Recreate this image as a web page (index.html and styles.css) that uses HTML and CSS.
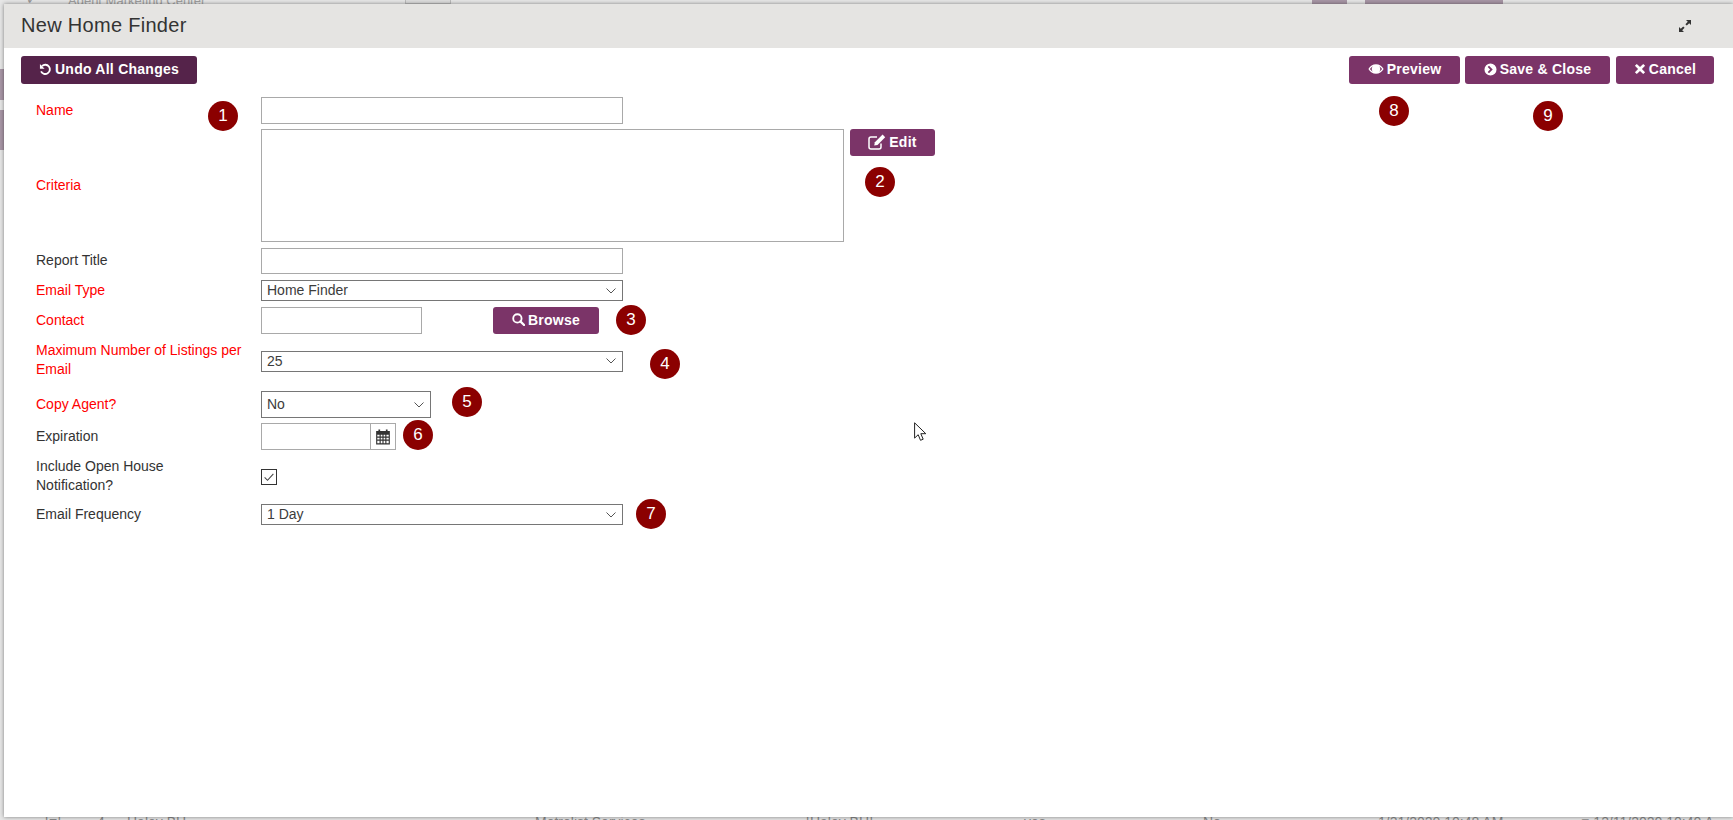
FILE: index.html
```html
<!DOCTYPE html>
<html lang="en">
<head>
<meta charset="utf-8">
<title>New Home Finder</title>
<link rel="stylesheet" href="styles.css">
</head>
<body>
<div class="behind">
  <span class="bg-text bg-top">Agent Marketing Center</span>
  <span class="bg-check">&#10003;</span>
  <span class="bg-box"></span>
  <span class="bg-purple bg-p1"></span>
  <span class="bg-purple bg-p2"></span>
  <span class="bg-purple bg-p3"></span>
  <span class="bg-purple bg-p4"></span>
  <span class="bg-text bg-b bg-b1">[=]</span>
  <span class="bg-text bg-b bg-b2">&#9656; 4</span>
  <span class="bg-text bg-b bg-b3">Haley BH</span>
  <span class="bg-text bg-b bg-b4">Metrolist Services</span>
  <span class="bg-text bg-b bg-b5">[Haley BH]</span>
  <span class="bg-text bg-b bg-b6">yes</span>
  <span class="bg-text bg-b bg-b7">No</span>
  <span class="bg-text bg-b bg-b8">1/31/2020 10:48 AM</span>
  <span class="bg-text bg-b bg-b9">&#9632; 12/11/2020 10:40 A</span>
</div>

<main class="modal">
  <header class="modal-head">
    <h1 class="modal-title">New Home Finder</h1>
    <svg class="expand" viewBox="0 0 14 14" aria-hidden="true"><path d="M8 1h5v5l-1.800-1.800-2.400 2.400-1.400-1.400 2.400-2.400zM6 13H1V8l1.800 1.800 2.400-2.400 1.400 1.400-2.400 2.400z"/></svg>
  </header>

  <div class="toolbar">
    <button class="btn btn-dark btn-undo" type="button">
      <svg class="ico" viewBox="0 0 14 14" aria-hidden="true"><path d="M3.200 3.300A5 5 0 1 1 2.200 9" fill="none" stroke="currentColor" stroke-width="2"/><path d="M1 1.200v5h5z"/></svg>Undo All Changes</button>
    <div class="toolbar-right">
      <button class="btn btn-preview" type="button">
        <svg class="ico ico-wide" viewBox="0 0 16 12" aria-hidden="true"><path fill-rule="evenodd" d="M8 1.200c3.200 0 5.900 1.900 7.600 4.800C13.900 8.900 11.200 10.800 8 10.800S2.100 8.900.4 6C2.100 3.100 4.800 1.200 8 1.200zM1.900 6c.8 1.200 1.800 2.100 3 2.800A3.900 3.900 0 0 1 4.900 3.200C3.700 3.900 2.700 4.800 1.900 6zM11.100 3.200a3.900 3.900 0 0 1 0 5.600c1.200-.7 2.200-1.600 3-2.800-.8-1.200-1.800-2.100-3-2.800z"/></svg>Preview</button>
      <button class="btn btn-save" type="button">
        <svg class="ico" viewBox="0 0 14 14" aria-hidden="true"><path fill-rule="evenodd" d="M7 .5a6.500 6.500 0 1 1 0 13 6.500 6.500 0 0 1 0-13zM5.400 3 4 4.400 6.600 7 4 9.600 5.400 11l4-4z"/></svg>Save &amp; Close</button>
      <button class="btn btn-cancel" type="button">
        <svg class="ico ico-x" viewBox="0 0 12 12" aria-hidden="true"><path d="M2.800.9 6 4.100 9.200.9l1.900 1.900L7.900 6l3.200 3.200-1.900 1.900L6 7.900l-3.200 3.200-1.900-1.900L4.100 6 .9 2.800z"/></svg>Cancel</button>
    </div>
    <span class="badge b8">8</span>
    <span class="badge b9">9</span>
  </div>

  <form class="form">
    <div class="row row-name">
      <label class="lbl req">Name</label>
      <input class="field w-full" type="text">
      <span class="badge b1">1</span>
    </div>
    <div class="row row-criteria">
      <label class="lbl req">Criteria</label>
      <div class="inline-top">
        <textarea class="field area"></textarea>
        <button class="btn btn-edit" type="button">
          <svg class="ico ico-edit" viewBox="0 0 18 16" aria-hidden="true"><path d="M13 9.500V13a2 2 0 0 1-2 2H3a2 2 0 0 1-2-2V5a2 2 0 0 1 2-2h6" fill="none" stroke="currentColor" stroke-width="1.500"/><path d="M14.600.6l2.600 2.600-7.700 7.700-3.300.7.700-3.300z"/></svg>Edit</button>
      </div>
      <span class="badge b2">2</span>
    </div>
    <div class="row row-title">
      <label class="lbl">Report Title</label>
      <input class="field w-full h-26" type="text">
    </div>
    <div class="row row-type">
      <label class="lbl req">Email Type</label>
      <select class="sel w-full h-21"><option>Home Finder</option></select>
    </div>
    <div class="row row-contact">
      <label class="lbl req">Contact</label>
      <div class="inline-mid">
        <input class="field w-contact" type="text">
        <button class="btn btn-browse" type="button">
          <svg class="ico" viewBox="0 0 14 14" aria-hidden="true"><circle cx="5.800" cy="5.800" r="4.500" fill="none" stroke="currentColor" stroke-width="2"/><path d="M9 9l4 4" stroke="currentColor" stroke-width="2.400" stroke-linecap="round"/></svg>Browse</button>
      </div>
      <span class="badge b3">3</span>
    </div>
    <div class="row row-max">
      <label class="lbl req lbl-up">Maximum Number of Listings per Email</label>
      <select class="sel w-full h-21"><option>25</option></select>
      <span class="badge b4">4</span>
    </div>
    <div class="row row-copy">
      <label class="lbl req">Copy Agent?</label>
      <select class="sel w-copy"><option>No</option></select>
      <span class="badge b5">5</span>
    </div>
    <div class="row row-exp">
      <label class="lbl">Expiration</label>
      <div class="date">
        <input class="field date-input" type="text">
        <span class="date-addon">
          <svg class="cal" viewBox="0 0 14 14" preserveAspectRatio="none" aria-hidden="true"><path fill-rule="evenodd" d="M1 2.500h2V1.200h1.500v1.300h5V1.200H11v1.300h2V13.500H1zM2 5.500V7h2V5.500zM5 5.500V7h1.500V5.500zM7.500 5.500V7H9V5.500zM10 5.500V7h2V5.500zM2 8v1.500h2V8zM5 8v1.500h1.500V8zM7.500 8v1.500H9V8zM10 8v1.500h2V8zM2 10.500v2h2v-2zM5 10.500v2h1.500v-2zM7.500 10.500v2H9v-2zM10 10.500v2h2v-2z"/></svg>
        </span>
      </div>
      <span class="badge b6">6</span>
    </div>
    <div class="row row-include">
      <label class="lbl lbl-narrow lbl-up">Include Open House Notification?</label>
      <span class="check">
        <svg viewBox="0 0 16 16" aria-hidden="true"><path d="M3 8.500 6.300 11.800 13 4.500" fill="none" stroke="#444" stroke-width="1.200"/></svg>
      </span>
    </div>
    <div class="row row-freq">
      <label class="lbl">Email Frequency</label>
      <select class="sel w-full h-21"><option>1 Day</option></select>
      <span class="badge b7">7</span>
    </div>
  </form>
</main>

<svg class="cursor" viewBox="0 0 13 20" aria-hidden="true"><path d="M.6.8v15.300l3.600-3.400 2.300 5.600 2.700-1.100-2.400-5.500h5z" fill="#fff" stroke="#222" stroke-width="1"/></svg>
</body>
</html>
```

FILE: styles.css
```css
* { box-sizing: border-box; }

html, body {
  margin: 0;
  height: 100%;
  overflow: hidden;
}

body {
  background: #dcdcdc;
  font-family: "Liberation Sans", Arial, sans-serif;
  font-size: 14px;
  color: #333;
}

/* page dimmed behind the dialog */
.behind {
  position: fixed;
  inset: 0;
  background: #e6e6e6;
  overflow: hidden;
}
.bg-text { position: absolute; color: #8a8a8a; font-size: 14px; line-height: 16px; white-space: nowrap; }
.bg-top { left: 68px; top: -7px; font-size: 13px; color: #a0a0a0; }
.bg-check { position: absolute; left: 26px; top: -9px; color: #999; font-size: 14px; }
.bg-box { position: absolute; left: 405px; top: -6px; width: 46px; height: 10px; border: 1px solid #bbb; background: #ddd; }
.bg-purple { position: absolute; background: #a896a6; }
.bg-p1 { left: 1312px; top: 0; width: 35px; height: 4px; }
.bg-p2 { left: 1365px; top: 0; width: 138px; height: 4px; }
.bg-p3 { left: 0; top: 69px; width: 4px; height: 31px; }
.bg-p4 { left: 0; top: 110px; width: 4px; height: 40px; }
.bg-b { top: 814px; }
.bg-b1 { left: 45px; }
.bg-b2 { left: 86px; }
.bg-b3 { left: 127px; }
.bg-b4 { left: 535px; }
.bg-b5 { left: 806px; }
.bg-b6 { left: 1024px; }
.bg-b7 { left: 1203px; }
.bg-b8 { left: 1378px; }
.bg-b9 { left: 1581px; }

/* dialog */
.modal {
  position: fixed;
  left: 4px;
  top: 4px;
  right: 0;
  bottom: 3px;
  background: #fff;
  box-shadow: 0 0 4px rgba(0, 0, 0, .45);
}

.modal-head {
  height: 44px;
  background: #e5e4e2;
  display: flex;
  align-items: center;
  justify-content: space-between;
  padding: 0 41px 0 17px;
}
.modal-title {
  margin: 0 0 2px;
  font-size: 20px;
  font-weight: 400;
  letter-spacing: .3px;
  color: #333;
  line-height: 24px;
}
.expand { width: 14px; height: 14px; fill: #333; }

/* buttons */
.btn {
  height: 28px;
  border: 0;
  border-radius: 3px;
  background: #7b3468;
  color: #fff;
  font-family: "Liberation Sans", Arial, sans-serif;
  font-size: 14px;
  font-weight: 700;
  letter-spacing: .25px;
  display: inline-flex;
  align-items: center;
  justify-content: center;
  gap: 3px;
  padding: 0 0 2px;
}
.btn-dark { background: #55234a; }
.ico { width: 13px; height: 13px; fill: currentColor; flex: none; }
.ico-wide { width: 16px; height: 12px; }
.ico-x { width: 12px; height: 12px; }
.ico-edit { width: 18px; height: 16px; }

.toolbar {
  position: relative;
  display: flex;
  justify-content: space-between;
  padding: 8px 19px 0 17px;
  height: 49px;
}
.toolbar-right { display: flex; gap: 5px; }
.btn-undo { width: 176px; }
.btn-preview { width: 111px; }
.btn-save { width: 145px; }
.btn-cancel { width: 98px; margin-left: 1px; }

/* form */
.form {
  display: flex;
  flex-direction: column;
  gap: 5px;
  padding-left: 32px;
}
.row {
  display: grid;
  grid-template-columns: 225px 1fr;
  align-items: center;
  position: relative;
}
.row-name { height: 27px; }
.row-criteria { height: 114px; align-items: start; }
.row-criteria .lbl { align-self: center; padding-bottom: 2px; }
.row-title { height: 27px; align-items: start; }
.row-title .lbl { line-height: 25px; }
.row-type { height: 22px; align-items: start; }
.row-type .lbl { line-height: 21px; }
.row-contact { height: 27px; }
.row-max { height: 44px; margin-bottom: 3px; }
.row-copy { height: 27px; }
.row-exp { height: 27px; }
.row-include { height: 44px; }
.row-freq { height: 21px; }

.lbl { display: block; line-height: 19px; color: #333; }
.req { color: #f00; }
.lbl-narrow { max-width: 160px; }
.lbl-up { margin-top: -2px; }

.field {
  display: block;
  height: 27px;
  border: 1px solid #a9a9a9;
  background: #fff;
  padding: 0 5px;
  margin: 0;
  border-radius: 0;
  font: inherit;
  outline: 0;
}
.w-full { width: 362px; }
.h-26 { height: 26px; }
.w-contact { width: 161px; }
.area { width: 583px; height: 113px; resize: none; }

.sel {
  display: block;
  height: 27px;
  border: 1px solid #767676;
  border-radius: 0;
  background: #fff url("data:image/svg+xml,%3Csvg xmlns='http://www.w3.org/2000/svg' width='10' height='6'%3E%3Cpath d='M.5.5 5 5 9.500.5' fill='none' stroke='%23555' stroke-width='1'/%3E%3C/svg%3E") no-repeat right 6px center;
  appearance: none;
  padding: 0 0 2px 5px;
  margin: 0;
  font: inherit;
  color: #3c3c3c;
}
.sel.h-21 { height: 21px; line-height: 18px; }
.w-copy { width: 170px; }

.inline-top { display: flex; align-items: flex-start; gap: 6px; }
.inline-mid { display: flex; align-items: center; }
.btn-edit { width: 85px; height: 27px; }
.btn-browse { width: 106px; height: 27px; margin-left: 71px; }

.date { display: flex; }
.date-input { width: 110px; }
.date-addon {
  width: 26px;
  height: 27px;
  margin-left: -1px;
  border: 1px solid #a9a9a9;
  display: flex;
  align-items: center;
  justify-content: center;
}
.cal { width: 16px; height: 17px; fill: #333; }

.check {
  width: 16px;
  height: 16px;
  border: 1px solid #333;
  display: block;
  background: #fff;
}
.check svg { display: block; width: 14px; height: 14px; }

/* numbered callouts placed over the form */
.badge {
  position: absolute;
  width: 30px;
  height: 30px;
  border-radius: 50%;
  background: #8b0000;
  color: #fff;
  font-size: 17px;
  line-height: 29px;
  text-align: center;
}
.b1 { left: 172px; top: 4px; }
.b2 { left: 829px; top: 38px; }
.b3 { left: 580px; top: -2px; }
.b4 { left: 614px; top: 10px; }
.b5 { left: 416px; top: -4px; }
.b6 { left: 367px; top: -3px; }
.b7 { left: 600px; top: -5px; }
.b8 { left: 1375px; top: 48px; }
.b9 { left: 1529px; top: 53px; }

.cursor {
  position: fixed;
  left: 914px;
  top: 422px;
  width: 13px;
  height: 20px;
}
```
